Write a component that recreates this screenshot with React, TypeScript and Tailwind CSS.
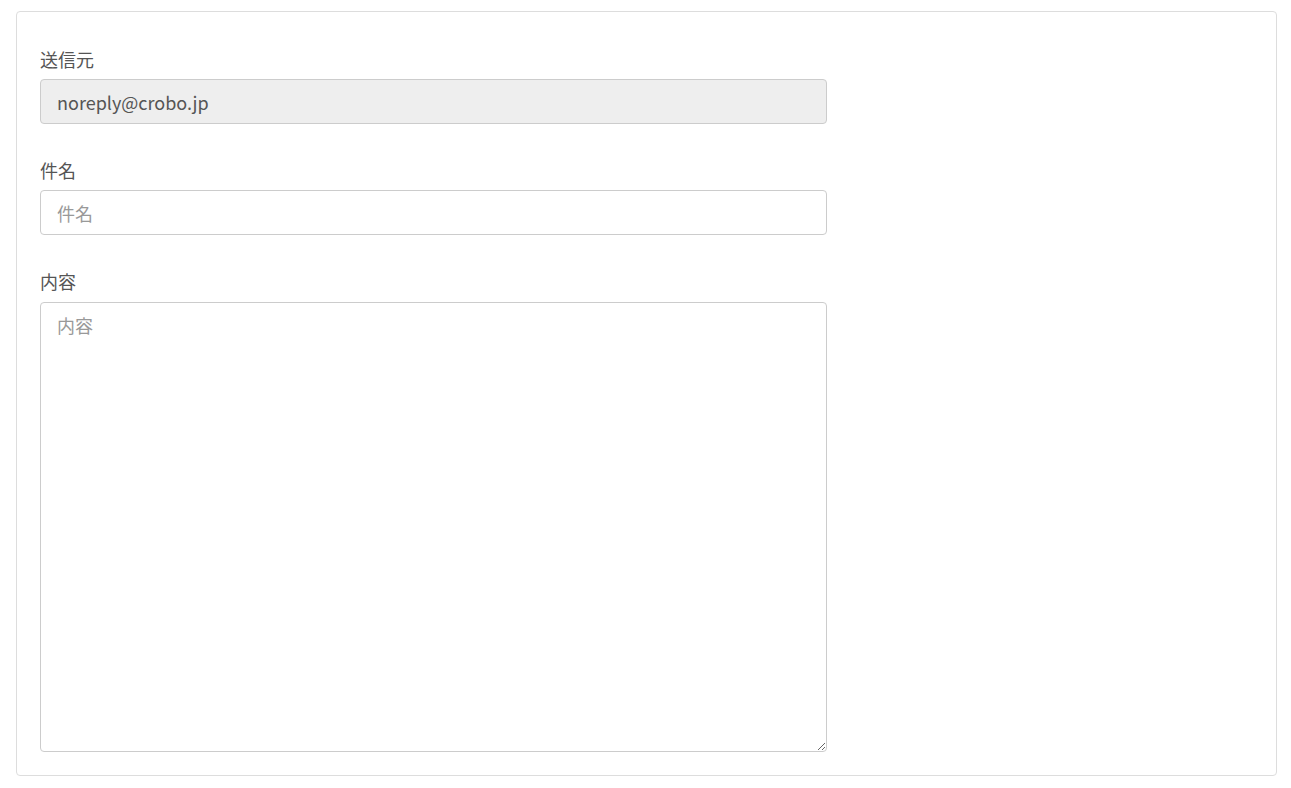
import React from 'react';

const font = { fontFamily: '"Noto Sans CJK JP", "Noto Sans", sans-serif' };

export default function App() {
  return (
    <div className="min-h-screen bg-white pt-[11px] pl-4 pr-[14px] pb-3" style={font}>
      <div className="border border-[#dddddd] rounded bg-white px-[23px] pt-[35px] pb-[23px]">
        <div className="w-[787px] flex flex-col">
          <label className="text-[18px] leading-6 text-[#555555] mb-2">送信元</label>
          <input
            type="text"
            readOnly
            value="noreply@crobo.jp"
            className="h-[45px] border border-[#cccccc] rounded bg-[#eeeeee] px-4 text-[18px] text-[#555555] outline-none"
          />

          <label className="text-[18px] leading-6 text-[#555555] mb-2 mt-[34px]">件名</label>
          <input
            type="text"
            placeholder="件名"
            className="h-[45px] border border-[#cccccc] rounded bg-white px-4 text-[18px] text-[#555555] placeholder:text-[#999999] outline-none"
          />

          <label className="text-[18px] leading-6 text-[#555555] mb-[9px] mt-[34px]">内容</label>
          <textarea
            placeholder="内容"
            className="h-[450px] border border-[#cccccc] rounded bg-white px-4 py-[10px] text-[18px] leading-6 text-[#555555] placeholder:text-[#999999] outline-none"
          />
        </div>
      </div>
    </div>
  );
}
